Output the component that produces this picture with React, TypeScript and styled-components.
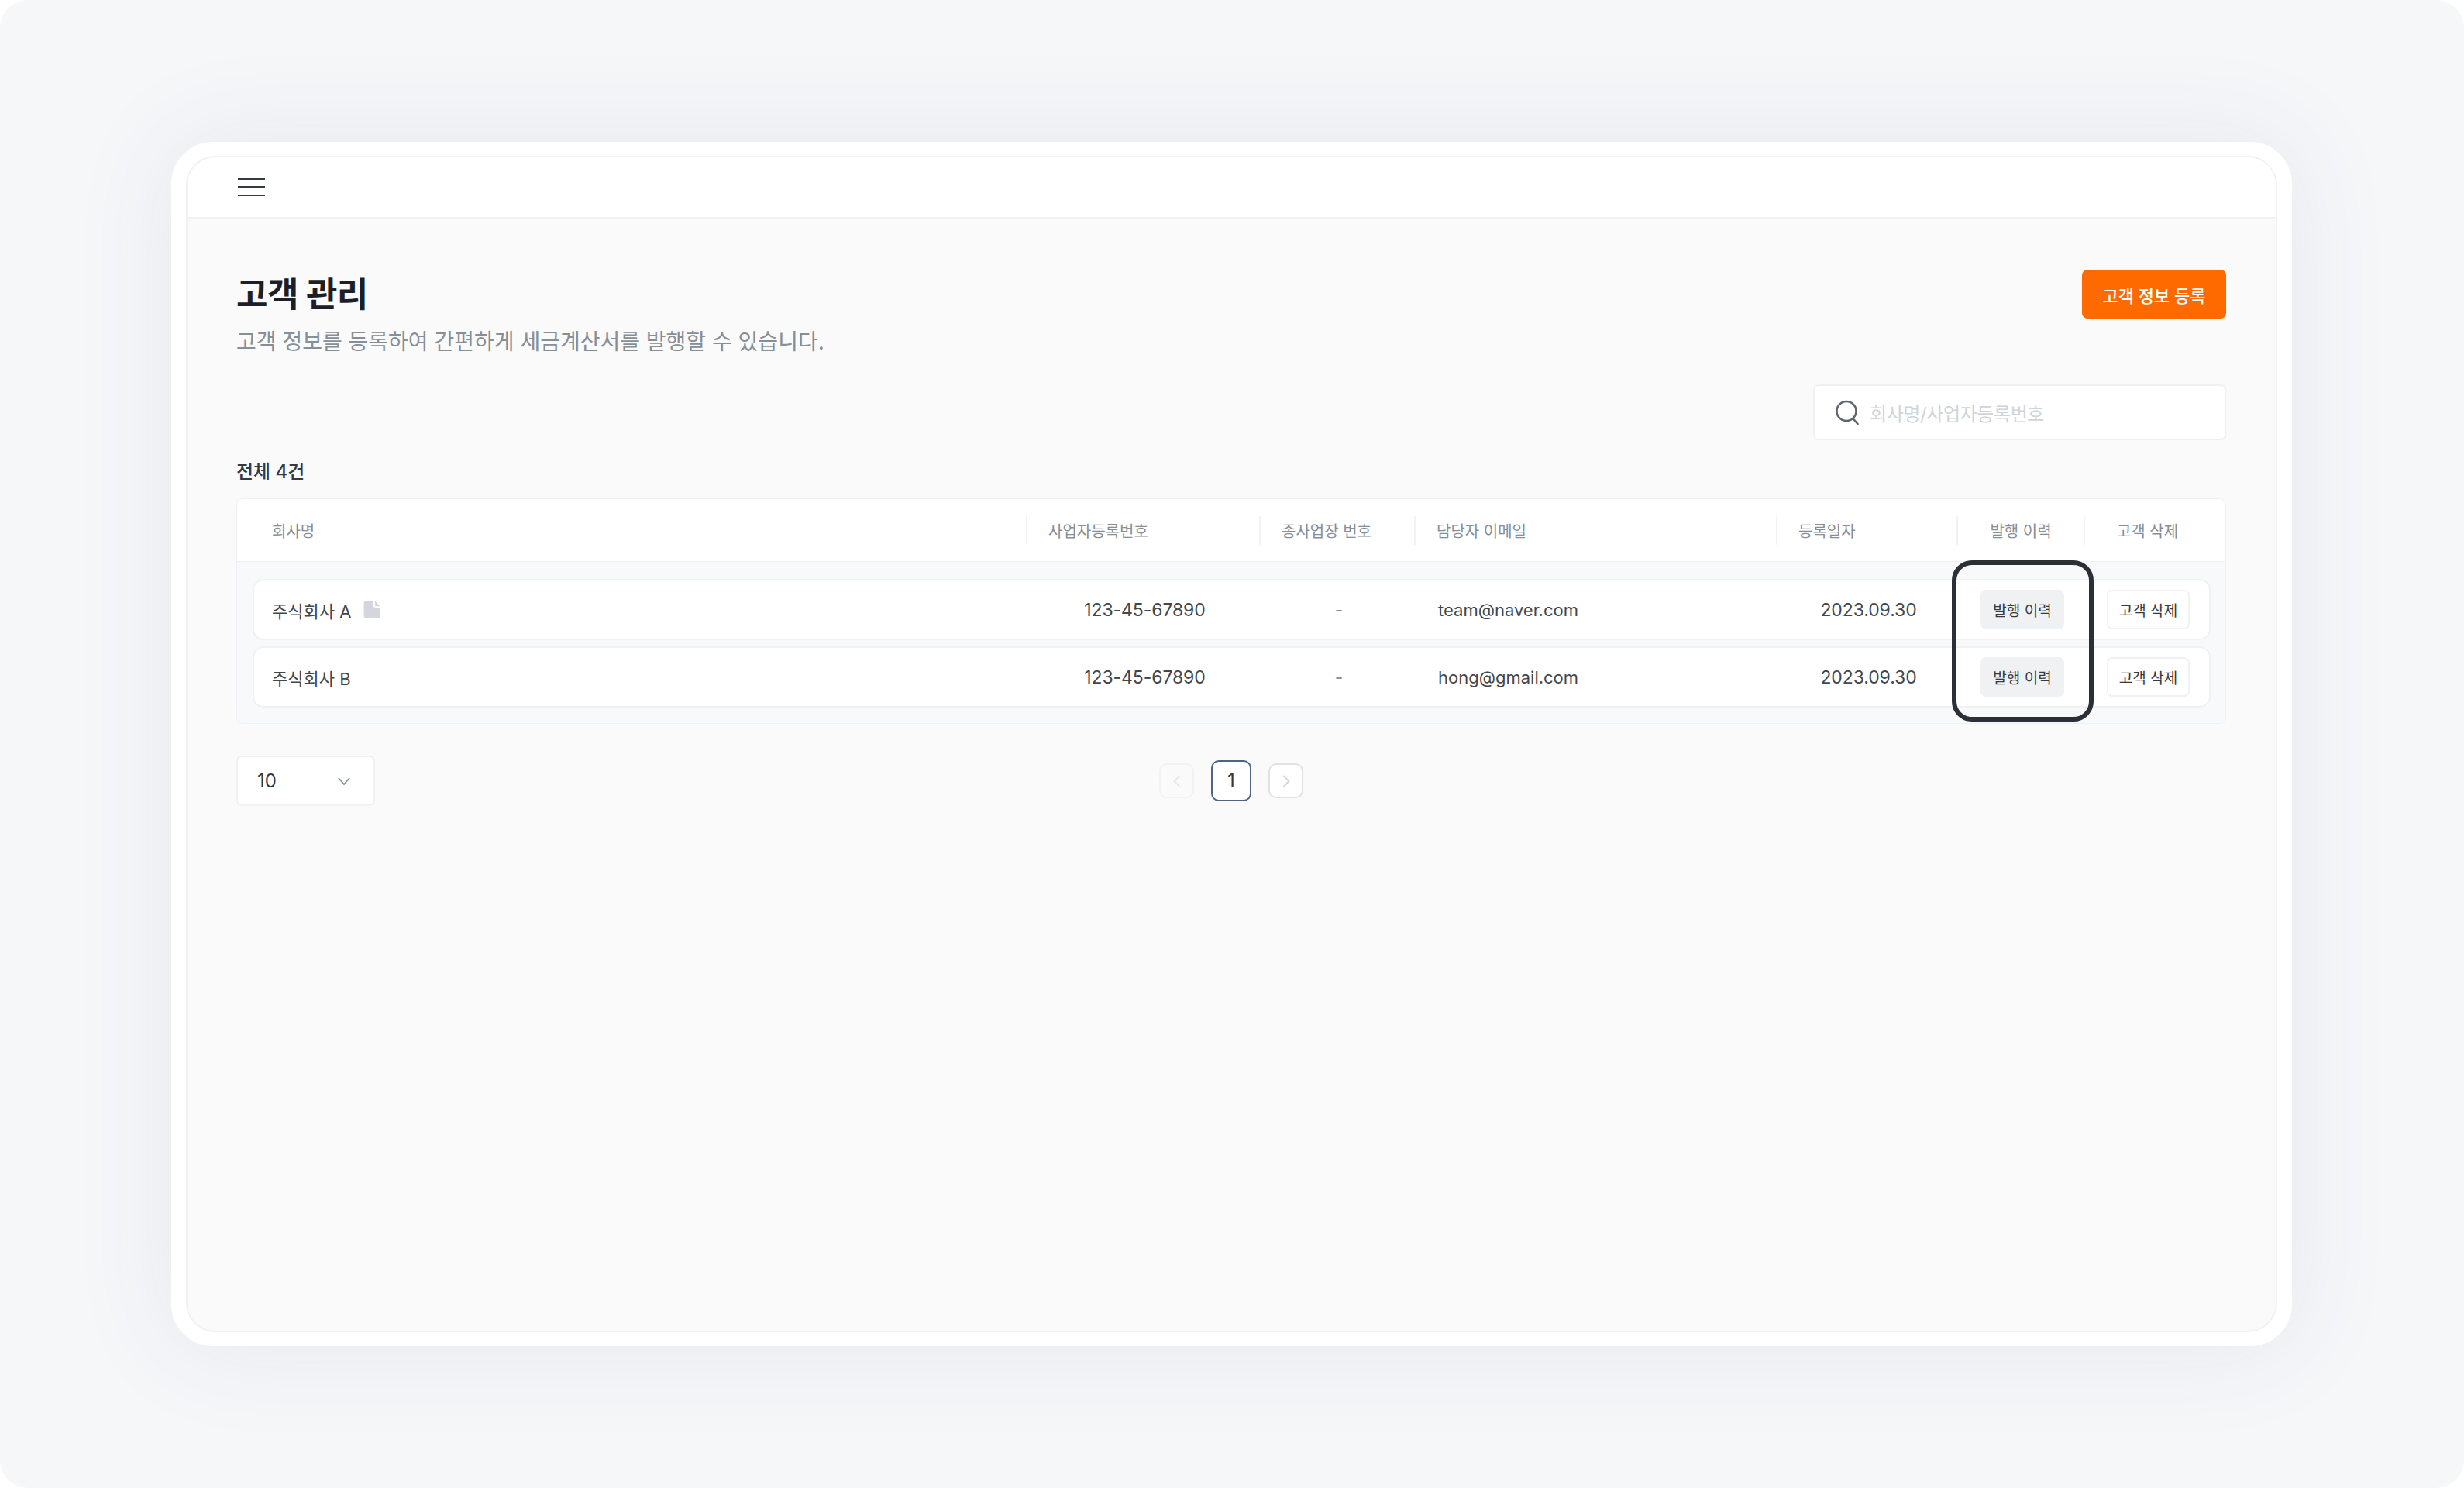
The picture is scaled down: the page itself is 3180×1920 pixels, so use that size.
import styled, { createGlobalStyle, css } from 'styled-components';

const GlobalStyle = createGlobalStyle`
  html, body {
    margin: 0;
    padding: 0;
    background: #fff;
  }

  * {
    box-sizing: border-box;
  }
`;

const columns = css`
  display: grid;
  grid-template-columns: 998px 301px 200px 467px 233px 164px 163px;
  align-items: center;
`;

const Page = styled.div`
  width: 3180px;
  height: 1920px;
  padding-right: 1px;
  border-radius: 36px;
  background: #f6f7f9;
  display: flex;
  align-items: center;
  justify-content: center;
  font-family: Inter, 'Noto Sans CJK KR', sans-serif;
  color: #343a40;
`;

const Frame = styled.div`
  width: 2737px;
  height: 1554px;
  padding: 18px 19px;
  border-radius: 54px;
  background: #fff;
  box-shadow: 0 0 130px 10px rgba(60, 70, 110, 0.075);
`;

const Screen = styled.div`
  height: 100%;
  display: flex;
  flex-direction: column;
  border: 2px solid #f0f1f3;
  border-radius: 38px;
  background: #fafafb;
  overflow: hidden;
`;

const TopBar = styled.div`
  height: 79px;
  flex: none;
  display: flex;
  align-items: center;
  padding-left: 65px;
  background: #fff;
  border-bottom: 2px solid #f0f1f3;
`;

const MenuButton = styled.div`
  width: 35px;
  display: flex;
  flex-direction: column;
  gap: 8px;

  span {
    height: 2.5px;
    background: #343a40;
  }
`;

const Content = styled.div`
  flex: 1;
  padding: 66px 64px 0 63px;
`;

const TitleRow = styled.div`
  display: flex;
  justify-content: space-between;
  align-items: flex-start;
`;

const Title = styled.h1`
  margin: 0;
  padding-top: 1px;
  font-size: 44px;
  line-height: 63px;
  font-weight: 700;
  letter-spacing: -0.5px;
  color: #1c2026;
`;

const Subtitle = styled.p`
  margin: 9px 0 0;
  font-size: 28px;
  line-height: 40px;
  font-weight: 400;
  color: #868e96;
`;

const PrimaryButton = styled.button`
  width: 186px;
  height: 63px;
  border: 0;
  border-radius: 7px;
  background: #ff6a00;
  color: #fff;
  font: 500 22px Inter, 'Noto Sans CJK KR', sans-serif;
`;

const SearchRow = styled.div`
  display: flex;
  justify-content: flex-end;
  margin-top: 35px;
`;

const SearchBox = styled.div`
  width: 533px;
  height: 72px;
  display: flex;
  align-items: center;
  gap: 13px;
  padding-left: 26px;
  background: #fff;
  border: 2px solid #eff0f3;
  border-radius: 7px;
  font-size: 24px;
  letter-spacing: -0.4px;
  color: #ced4da;
`;

const TotalLabel = styled.div`
  margin-top: 24px;
  font-size: 24px;
  line-height: 34px;
  font-weight: 500;
  color: #343a40;
`;

const Table = styled.div`
  position: relative;
  width: 2568px;
  margin-top: 17px;
  background: #f8f9fa;
  border: 1px solid #eff0f3;
  border-radius: 8px;
  padding-bottom: 20px;
`;

const HeaderRow = styled.div`
  ${columns}
  height: 81px;
  padding: 0 19px 0 20px;
  background: #fff;
  border-bottom: 1px solid #eff0f3;
  border-radius: 8px 8px 0 0;
`;

const HeaderCell = styled.div<{ $center?: boolean; $first?: boolean }>`
  height: 37px;
  display: flex;
  align-items: center;
  justify-content: ${(p) => (p.$center ? 'center' : 'flex-start')};
  padding-left: ${(p) => (p.$center ? '0' : p.$first ? '25px' : '27px')};
  border-left: ${(p) => (p.$first ? '0' : '2px solid #f1f2f4')};
  font-size: 20px;
  font-weight: 400;
  color: #868e96;
`;

const RowList = styled.div`
  display: flex;
  flex-direction: column;
  gap: 8px;
  padding: 22px 19px 0 20px;
`;

const Row = styled.div`
  ${columns}
  height: 79px;
  background: #fff;
  border-radius: 14px;
  box-shadow: inset 0 0 0 2px #f0f1f3;
  font-size: 23px;
  letter-spacing: -0.1px;
  color: #42474d;
`;

const NameCell = styled.div`
  display: flex;
  align-items: center;
  gap: 15px;
  padding-left: 25px;
  font-size: 22px;
  letter-spacing: 0;
`;

const TextCell = styled.div<{ $muted?: boolean }>`
  display: flex;
  justify-content: center;
  padding-left: 6px;
  color: ${(p) => (p.$muted ? '#868e96' : '#42474d')};
`;

const EmailCell = styled.div`
  padding-left: 31px;
  font-size: 22px;
  letter-spacing: 0;
`;

const ActionCell = styled.div<{ $tight?: boolean }>`
  display: flex;
  justify-content: center;
  padding-left: ${(p) => (p.$tight ? '4px' : '6px')};
`;

const RowButton = styled.button<{ $filled?: boolean }>`
  width: ${(p) => (p.$filled ? '108px' : '107px')};
  height: 51px;
  padding: 0;
  border-radius: 7px;
  border: ${(p) => (p.$filled ? '0' : '2px solid #f0f1f3')};
  background: ${(p) => (p.$filled ? '#f0f1f3' : '#fff')};
  color: #343a40;
  font: 400 19px Inter, 'Noto Sans CJK KR', sans-serif;
`;

const Highlight = styled.div`
  position: absolute;
  left: 2213px;
  top: 79px;
  width: 183px;
  height: 208px;
  border: 6px solid #2b2f36;
  border-radius: 26px;
  pointer-events: none;
`;

const Footer = styled.div`
  display: grid;
  grid-template-columns: 1fr auto 1fr;
  align-items: center;
  width: 2568px;
  margin-top: 41px;
`;

const PageSize = styled.div`
  width: 179px;
  height: 65px;
  display: flex;
  align-items: center;
  justify-content: space-between;
  padding: 0 30px 0 25px;
  background: #fff;
  border: 2px solid #f0f1f3;
  border-radius: 7px;
  font-size: 24px;
  color: #343a40;
`;

const Pager = styled.div`
  display: flex;
  align-items: center;
  gap: 22px;
`;

const PageArrow = styled.div<{ $disabled?: boolean }>`
  width: 45px;
  height: 45px;
  display: flex;
  align-items: center;
  justify-content: center;
  border: 2px solid ${(p) => (p.$disabled ? '#f1f2f4' : '#e0e2e6')};
  border-radius: 10px;
  background: ${(p) => (p.$disabled ? '#fafafb' : '#fff')};
`;

const PageNumber = styled.div`
  width: 52px;
  height: 53px;
  display: flex;
  align-items: center;
  justify-content: center;
  border: 2px solid #4d6485;
  border-radius: 10px;
  background: #fff;
  font-size: 24px;
  color: #343a40;
`;

const SearchIcon = () => (
  <svg width="32" height="32" viewBox="0 0 32 32" fill="none" stroke="#5f656c" strokeWidth="2.6">
    <circle cx="15" cy="14.5" r="12.5" />
    <path d="M23.5 24l6 7" strokeLinecap="round" />
  </svg>
);

const FileIcon = () => (
  <svg width="24" height="23" viewBox="2 1 20 22">
    <path
      d="M5 1h8.5v5.5c0 1.9 1.5 3.5 3.5 3.5h5v10c0 1.7-1.3 3-3 3H5c-1.7 0-3-1.3-3-3V4c0-1.7 1.3-3 3-3z"
      fill="#d3d6dd"
    />
    <path d="M15.8 1.3L22 8h-4.4c-1 0-1.8-.8-1.8-1.8z" fill="#d3d6dd" />
  </svg>
);

const Chevron = ({ dir, color }: { dir: 'left' | 'right' | 'down'; color: string }) => {
  if (dir === 'down') {
    return (
      <svg width="16" height="10" viewBox="0 0 16 10" fill="none" stroke={color} strokeWidth="1.8">
        <path d="M1 1l7 8 7-8" />
      </svg>
    );
  }
  return (
    <svg width="10" height="16" viewBox="0 0 10 16" fill="none" stroke={color} strokeWidth="1.8">
      <path d={dir === 'left' ? 'M8.5 1L1.5 8l7 7' : 'M1.5 1l7 7-7 7'} />
    </svg>
  );
};

type Customer = {
  id: number;
  name: string;
  hasFile: boolean;
  email: string;
};

const customers: Customer[] = [
  { id: 1, name: '주식회사 A', hasFile: true, email: 'team@naver.com' },
  { id: 2, name: '주식회사 B', hasFile: false, email: 'hong@gmail.com' },
];

const App = () => {
  return (
    <Page>
      <GlobalStyle />
      <Frame>
        <Screen>
          <TopBar>
            <MenuButton>
              <span />
              <span />
              <span />
            </MenuButton>
          </TopBar>
          <Content>
            <TitleRow>
              <div>
                <Title>고객 관리</Title>
                <Subtitle>고객 정보를 등록하여 간편하게 세금계산서를 발행할 수 있습니다.</Subtitle>
              </div>
              <PrimaryButton>고객 정보 등록</PrimaryButton>
            </TitleRow>

            <SearchRow>
              <SearchBox>
                <SearchIcon />
                회사명/사업자등록번호
              </SearchBox>
            </SearchRow>

            <TotalLabel>전체 4건</TotalLabel>

            <Table>
              <HeaderRow>
                <HeaderCell $first>회사명</HeaderCell>
                <HeaderCell>사업자등록번호</HeaderCell>
                <HeaderCell>종사업장 번호</HeaderCell>
                <HeaderCell>담당자 이메일</HeaderCell>
                <HeaderCell>등록일자</HeaderCell>
                <HeaderCell $center>발행 이력</HeaderCell>
                <HeaderCell $center>고객 삭제</HeaderCell>
              </HeaderRow>
              <RowList>
                {customers.map((customer) => (
                  <Row key={customer.id}>
                    <NameCell>
                      {customer.name}
                      {customer.hasFile && <FileIcon />}
                    </NameCell>
                    <TextCell>123-45-67890</TextCell>
                    <TextCell $muted>-</TextCell>
                    <EmailCell>{customer.email}</EmailCell>
                    <TextCell>2023.09.30</TextCell>
                    <ActionCell>
                      <RowButton $filled>발행 이력</RowButton>
                    </ActionCell>
                    <ActionCell $tight>
                      <RowButton>고객 삭제</RowButton>
                    </ActionCell>
                  </Row>
                ))}
              </RowList>
              <Highlight />
            </Table>

            <Footer>
              <PageSize>
                10
                <Chevron dir="down" color="#868e96" />
              </PageSize>
              <Pager>
                <PageArrow $disabled>
                  <Chevron dir="left" color="#e4e6ea" />
                </PageArrow>
                <PageNumber>1</PageNumber>
                <PageArrow>
                  <Chevron dir="right" color="#ced4da" />
                </PageArrow>
              </Pager>
            </Footer>
          </Content>
        </Screen>
      </Frame>
    </Page>
  );
};

export default App;
